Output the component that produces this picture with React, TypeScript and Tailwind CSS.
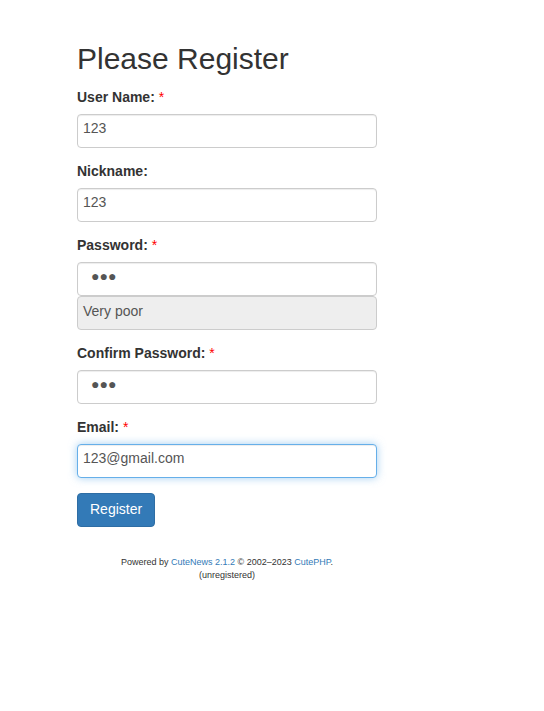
import type { ReactNode } from "react";

const inputBase =
  "block h-[34px] w-[300px] rounded-[4px] border border-[#ccc] bg-white px-[5px] pt-0 pb-[6px] text-[14px] text-[#555] shadow-[inset_0_1px_1px_rgba(0,0,0,0.075)] outline-none";

function Field({
  label,
  required,
  children,
}: {
  label: string;
  required?: boolean;
  children: ReactNode;
}) {
  return (
    <div className="mb-[15px]">
      <label className="mb-[9px] block text-[14px] leading-[16px] font-bold text-[#333]">
        {label}
        {required && <span className="ml-[4px] font-normal text-[#f00]">*</span>}
      </label>
      {children}
    </div>
  );
}

export default function App() {
  return (
    <div className="min-h-[711px] bg-white font-['Liberation_Sans',Arial,sans-serif] text-[#333]">
      <div className="ml-[77px] w-[300px] pt-[42px]">
        <h2 className="mb-[14px] text-[30px] leading-[33px] font-normal">
          Please Register
        </h2>

        <form onSubmit={(e) => e.preventDefault()}>
          <Field label="User Name:" required>
            <input className={inputBase} defaultValue="123" />
          </Field>

          <Field label="Nickname:">
            <input className={inputBase} defaultValue="123" />
          </Field>

          <Field label="Password:" required>
            <input readOnly className={inputBase + " pl-[13px]"} value="●●●" />
            <div className="flex h-[34px] w-[300px] items-center rounded-[4px] border border-[#ccc] bg-[#eee] px-[5px] pb-[4px] text-[14px] text-[#555]">
              Very poor
            </div>
          </Field>

          <Field label="Confirm Password:" required>
            <input readOnly className={inputBase + " pl-[13px]"} value="●●●" />
          </Field>

          <Field label="Email:" required>
            <input
              className="block h-[34px] w-[300px] rounded-[4px] border border-[#66afe9] bg-white px-[5px] pt-0 pb-[6px] text-[14px] text-[#555] shadow-[inset_0_1px_1px_rgba(0,0,0,0.075),0_0_8px_rgba(102,175,233,0.6)] outline-none"
              defaultValue="123@gmail.com"
            />
          </Field>

          <button
            type="submit"
            className="h-[34px] rounded-[4px] border border-[#2e6da4] bg-[#337ab7] px-[12px] pb-[2px] text-[14px] text-white"
          >
            Register
          </button>
        </form>

        <div className="mt-[29px] text-center text-[9px] leading-[13px] text-[#333]">
          <div>
            Powered by <a className="text-[#337ab7]">CuteNews 2.1.2</a> © 2002–2023{" "}
            <a className="text-[#337ab7]">CutePHP</a>.
          </div>
          <div>(unregistered)</div>
        </div>
      </div>
    </div>
  );
}
